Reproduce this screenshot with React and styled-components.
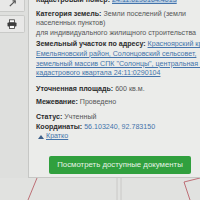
import React from 'react'
import styled, { createGlobalStyle } from 'styled-components'

const GlobalStyle = createGlobalStyle`
  html, body {
    margin: 0;
    padding: 0;
    width: 200px;
    height: 200px;
    overflow: hidden;
    background: #dedfdd;
  }
  * {
    box-sizing: border-box;
  }
`

const Page = styled.div`
  width: 200px;
  height: 200px;
  display: flex;
  flex-direction: column;
  font-family: 'Liberation Sans', Arial, sans-serif;
  background: #dedfdd;
  overflow: hidden;
`

const Top = styled.div`
  display: flex;
  height: 178px;
`

const Toolbar = styled.div`
  width: 28px;
  display: flex;
  flex-direction: column;
  gap: 3px;
  margin-top: -6px;
`

const ToolButton = styled.div`
  width: 25px;
  height: ${(p) => p.h}px;
  background: #e8e8e7;
  border: 1px solid #c9cac8;
  border-left: none;
  border-radius: 0 2px 2px 0;
  display: flex;
  align-items: center;
  justify-content: center;
  color: #4a4a4a;
`

const Panel = styled.div`
  flex: 1;
  background: #ebecea;
  border-left: 1px solid #c6c7c5;
  border-bottom: 1px solid #c6c7c5;
  padding: 0 0 0 7px;
  overflow: hidden;
  display: flex;
  flex-direction: column;
`

const Content = styled.div`
  margin-top: -4px;
  font-size: 7.1px;
  line-height: 9.6px;
  color: #3a3b3c;
  white-space: nowrap;
`

const Block = styled.div`
  margin-top: ${(p) => p.gap || 0}px;
`

const Label = styled.b`
  font-weight: bold;
  color: #2a2b2c;
`

const Value = styled.span`
  color: #555657;
`

const Link = styled.span`
  color: #4474ab;
  text-decoration: ${(p) => (p.plain ? 'none' : 'underline')};
  background: ${(p) => (p.selected ? '#bccfe2' : 'transparent')};
`

const Toggle = styled.div`
  color: #4474ab;
  display: flex;
  align-items: center;
  gap: 2px;
  padding-left: 2px;
`

const ToggleText = styled.span`
  text-decoration: underline;
`

const Action = styled.div`
  margin: 14px 0 0 13px;
  width: 142px;
  height: 18px;
  background: #30a03e;
  border-radius: 2px;
  color: #e6f3e7;
  font-size: 7.8px;
  display: flex;
  align-items: center;
  justify-content: center;
  white-space: nowrap;
`

const MapStrip = styled.div`
  flex: 1;
  background: #e1e2e0;
`

const MapSvg = styled.svg`
  display: block;
  width: 200px;
  height: 22px;
`

function ExpandIcon() {
  return (
    <svg width="9" height="9" viewBox="0 0 10 10" fill="none" stroke="#555" strokeWidth="1.3">
      <path d="M2 8 L8 2" />
      <path d="M5 2 H8 V5" />
    </svg>
  )
}

function PrinterIcon() {
  return (
    <svg width="10" height="10" viewBox="0 0 10 10" fill="#3c3c3c">
      <rect x="2.5" y="0.8" width="5" height="3" fill="#fafafa" stroke="#3c3c3c" strokeWidth="0.8" />
      <rect x="0.5" y="3.5" width="9" height="4" rx="0.8" />
      <rect x="2.5" y="6.5" width="5" height="3" fill="#fafafa" stroke="#3c3c3c" strokeWidth="0.8" />
    </svg>
  )
}

function App() {
  return (
    <Page>
      <GlobalStyle />
      <Top>
        <Toolbar>
          <ToolButton h={18}>
            <ExpandIcon />
          </ToolButton>
          <ToolButton h={18}>
            <PrinterIcon />
          </ToolButton>
        </Toolbar>
        <Panel>
          <Content>
            <Block>
              <Label>Кадастровый номер: </Label>
              <Link selected>24:11:0290104:4013</Link>
            </Block>
            <Block gap={4}>
              <Label>Категория земель: </Label>
              <Value>Земли поселений (земли</Value>
              <br />
              <Value>населенных пунктов)</Value>
              <br />
              <Value>для индивидуального жилищного строительства</Value>
            </Block>
            <Block gap={2}>
              <Label>Земельный участок по адресу: </Label>
              <Link>Красноярский край,</Link>
              <br />
              <Link>Емельяновский район, Солонцовский сельсовет,</Link>
              <br />
              <Link>земельный массив СПК "Солонцы", центральная часть</Link>
              <br />
              <Link>кадастрового квартала 24:11:0290104</Link>
            </Block>
            <Block gap={6}>
              <Label>Уточненная площадь: </Label>
              <Value>600 кв.м.</Value>
            </Block>
            <Block gap={4}>
              <Label>Межевание: </Label>
              <Value>Проведено</Value>
            </Block>
            <Block gap={5}>
              <Label>Статус: </Label>
              <Value>Учтенный</Value>
            </Block>
            <Block>
              <Label>Координаты: </Label>
              <Link plain>56.103240, 92.783150</Link>
            </Block>
            <Toggle>
              <svg width="6" height="4" viewBox="0 0 6 4">
                <path d="M0 4 L3 0 L6 4 Z" fill="#3d5f8a" />
              </svg>
              <ToggleText>Кратко</ToggleText>
            </Toggle>
          </Content>
          <Action>Посмотреть доступные документы</Action>
        </Panel>
      </Top>
      <MapStrip>
        <MapSvg viewBox="0 0 200 22">
          <path d="M37 0 L28 22" stroke="#b4525a" strokeWidth="0.8" fill="none" />
          <path d="M117 0 V22 M121 0 V22" stroke="#c4c4c2" strokeWidth="0.8" fill="none" />
          <path d="M184 4 L200 0 M190 22 L184 4" stroke="#b4525a" strokeWidth="0.8" fill="none" />
        </MapSvg>
      </MapStrip>
    </Page>
  )
}

export default App
